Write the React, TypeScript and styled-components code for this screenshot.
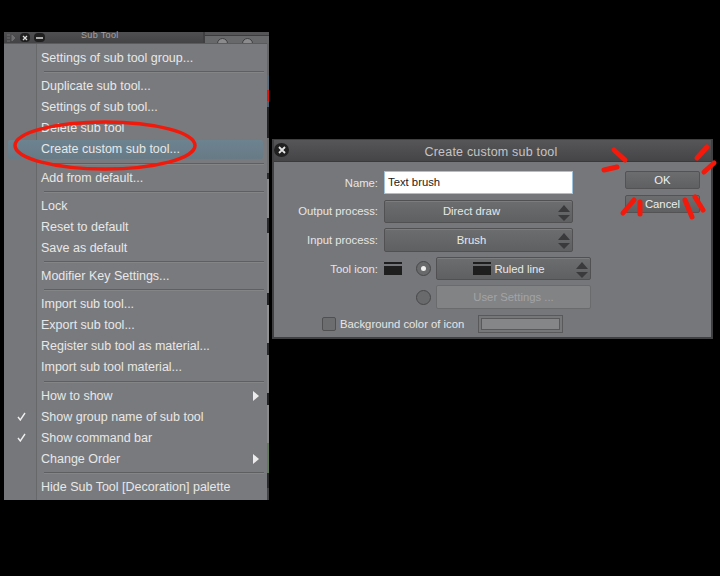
import React from 'react';
import styled, { createGlobalStyle } from 'styled-components';

const Global = createGlobalStyle`
  html, body { margin: 0; padding: 0; background: #000; }
  body { width: 720px; height: 576px; overflow: hidden; font-family: "Liberation Sans", Arial, sans-serif; }
`;
const Desktop = styled.div`position: relative; width: 720px; height: 576px; background: #000; overflow: hidden;`;

const Palette = styled.div`
  position: absolute; left: 4px; top: 32px; width: 265px; height: 468px;
  display: flex; flex-direction: column; background: #3d3d3f;
`;
const PaletteBar = styled.div`
  height: 11px; display: flex; align-items: center; gap: 4px; padding-left: 3px; position: relative;
  background: linear-gradient(#505052, #434345); flex: none;
`;
const PaletteTitle = styled.span`
  position: absolute; left: 77px; top: -2px; font-size: 9px; line-height: 11px; color: #a3a3a5; letter-spacing: .35px;
`;
const BarPill = styled.span<{ $wide?: boolean }>`
  width: ${p => (p.$wide ? 11 : 10)}px; height: 9px; border-radius: 4px; background: #1f1f20; display: flex; align-items: center; justify-content: center;
`;
const BehindTab = styled.div`
  position: absolute; left: 199px; top: 0; width: 66px; height: 11px; background: linear-gradient(#555557 0 3px, #3c3c3e 3px 4px, #68696b 4px); border-left: 2px solid #3f3f41;
  box-sizing: border-box; display: flex; gap: 14px; padding: 6px 0 0 12px; overflow: hidden;
`;
const BehindKnob = styled.span`width: 9px; height: 9px; border-radius: 50%; background: #8b8b8d; border: 1px solid #3f3f41;`;
const Strip = styled.div`
  position: absolute; right: 0; top: 11px; width: 2px; height: 457px;
  background: linear-gradient(#666 0 32px, #5a6d7d 32px 47px, #e0160c 47px 58px, #4f6070 58px 64px, #232323 64px 95px, #6e6e6e 95px 130px, #2a2a2a 130px 136px, #8a8a8a 136px 175px, #2a2a2a 175px 190px, #858585 190px 250px, #222 250px 262px, #909090 262px 300px, #2a2a2a 300px 312px, #858585 312px 350px, #222 350px 362px, #8a8a8a 362px 400px, #62795a 400px 430px, #2a2a2a 430px 445px, #444 445px);
`;
const Menu = styled.div`
  flex: 1; width: 263px; box-sizing: border-box; background: linear-gradient(90deg, #76777a 0 32px, #67686a 32px 33px, #797a7d 33px);
  padding: 4px 3px 2px; display: flex; flex-direction: column; border-top: 1px solid #5b5b5d; margin-right: 2px;
`;
const Row = styled.div<{ $selected?: boolean }>`
  height: ${p => (p.$selected ? 19 : 21)}px; line-height: ${p => (p.$selected ? 19 : 21)}px;
  margin: ${p => (p.$selected ? '1px' : '0')}; position: relative;
  font-size: 12.5px; color: #e8e8e8; white-space: nowrap;
  padding-left: ${p => (p.$selected ? '33px' : '34px')};
  background: ${p => (p.$selected ? 'linear-gradient(#6d8390, #677a86)' : 'none')};
  border-radius: ${p => (p.$selected ? '2px' : '0')};
`;
const CheckIcon = styled.svg`position: absolute; left: 10px; top: 5px;`;
const Arrow = styled.span`
  position: absolute; right: 5px; top: 5px; width: 0; height: 0;
  border-left: 6px solid #ececec; border-top: 5.5px solid transparent; border-bottom: 5.5px solid transparent;
`;
const Sep = styled.div`height: 2px; margin: 2.3px 0 3px 37px; background: #5e5f61; border-bottom: 1px solid #848587; box-sizing: border-box;`;

const Dialog = styled.div`
  position: absolute; left: 272px; top: 139px; width: 441px; height: 200px; box-sizing: border-box;
  display: flex; flex-direction: column; background: #76777a; border: 1px solid #404042; border-width: 1px 2px 2px 2px;
`;
const TitleBar = styled.div`
  height: 22px; flex: none; position: relative; text-align: center; line-height: 25px; font-size: 12.5px; letter-spacing: .2px;
  color: #c4c4c6; background: linear-gradient(#565658, #454547); border-bottom: 1px solid #3a3a3c; box-sizing: border-box; padding-right: 3px;
`;
const CloseBtn = styled.span`
  position: absolute; left: 0; top: 3px; width: 15px; height: 14px; border-radius: 50%; background: #202021;
  display: flex; align-items: center; justify-content: center;
`;
const DialogBody = styled.div`flex: 1; display: flex; padding: 9px 0 0;`;
const Form = styled.div`width: 351px; flex: none; display: flex; flex-direction: column; gap: 5px;`;
const FormRow = styled.div`display: flex; align-items: center; height: 23.6px;`;
const Label = styled.div`
  width: 104px; text-align: right; font-size: 11.3px; color: #e6e6e6; flex: none; margin-right: 6px; white-space: nowrap;
`;
const NameInput = styled.div`
  width: 189px; height: 23px; box-sizing: border-box; background: #fff; border: 1px solid #9fc3dc; padding-left: 3px;
  font-size: 11.3px; line-height: 21px; color: #222;
`;
const Select = styled.div<{ $width: number; $pad: number }>`
  width: ${p => p.$width}px; height: 23.6px; box-sizing: border-box; border: 1px solid #515153; border-radius: 2px;
  background: linear-gradient(#6c6d6f, #5f6062); color: #e8e8e8; font-size: 11.3px;
  display: flex; align-items: center; justify-content: center; gap: 3px; position: relative; padding-right: ${p => p.$pad}px;
  box-shadow: inset 0 1px 0 #7b7c7e;
`;
const Stepper = styled.svg`position: absolute; right: 1px; top: 3px;`;
const ToolGlyph = styled.svg`flex: none;`;
const Radio = styled.span<{ $on?: boolean }>`
  width: 15px; height: 15px; box-sizing: border-box; border-radius: 50%; border: 1px solid #48484a; background: #696a6c; flex: none;
  display: flex; align-items: center; justify-content: center; margin: 0 5px 0 0;
  &::after { content: ''; width: 5px; height: 5px; border-radius: 50%; background: ${p => (p.$on ? '#f0f0f0' : 'transparent')}; }
`;
const RadioSlot = styled.div<{ $indent: number }>`display: flex; align-items: center; margin-left: ${p => p.$indent}px;`;
const Disabled = styled.div`
  width: 155px; height: 23.6px; box-sizing: border-box; background: #828385; border: 1px solid #6a6b6d; border-radius: 2px;
  color: #a3a4a6; font-size: 11.3px; display: flex; align-items: center; justify-content: center;
`;
const BgRow = styled.div`display: flex; align-items: center; height: 18px; margin-top: 1px; padding-left: 48px;`;
const Checkbox = styled.span`width: 14px; height: 14px; box-sizing: border-box; border: 1px solid #505052; border-radius: 2px; background: #6c6d6f; flex: none;`;
const BgLabel = styled.span`margin-left: 4px; font-size: 11.3px; color: #e6e6e6; white-space: nowrap;`;
const Swatch = styled.span`
  margin-left: 14px; width: 85px; height: 18px; box-sizing: border-box; border: 1px solid #59595b; padding: 2px; background: #767779; display: block;
  &::after { content: ''; display: block; height: 100%; box-sizing: border-box; background: #858688; border: 1px solid #59595b; }
`;
const Buttons = styled.div`display: flex; flex-direction: column; gap: 6px;`;
const Push = styled.div`
  width: 75px; height: 18px; box-sizing: border-box; border: 1px solid #535355; border-radius: 2px; background: linear-gradient(#6c6d6f, #5f6062);
  color: #eee; font-size: 11.3px; line-height: 16px; text-align: center;
`;
const Overlay = styled.svg`position: absolute; left: 0; top: 0; pointer-events: none;`;

const top: (string | null | { t: string; sel?: boolean; check?: boolean; arrow?: boolean })[] = [
  'Settings of sub tool group...', null,
  'Duplicate sub tool...', 'Settings of sub tool...', 'Delete sub tool',
  { t: 'Create custom sub tool...', sel: true }, null,
  'Add from default...', null,
  'Lock', 'Reset to default', 'Save as default', null,
  'Modifier Key Settings...', null,
  'Import sub tool...', 'Export sub tool...', 'Register sub tool as material...', 'Import sub tool material...', null,
  { t: 'How to show', arrow: true }, { t: 'Show group name of sub tool', check: true }, { t: 'Show command bar', check: true }, { t: 'Change Order', arrow: true }, null,
  'Hide Sub Tool [Decoration] palette',
];

const StepIcon = () => (
  <Stepper width="14" height="18" viewBox="0 0 14 18">
    <path d="M7 1 13 8H1Z" fill="#3a3a3c" />
    <path d="M1 11H13L7 17Z" fill="#3a3a3c" />
  </Stepper>
);
const RuledIcon = () => (
  <ToolGlyph width="18" height="13" viewBox="0 0 18 13">
    <rect width="18" height="2" y="0" fill="#1e1e1f" />
    <rect width="18" height="9" y="4" fill="#1e1e1f" />
  </ToolGlyph>
);

export default function App() {
  return (
    <Desktop>
      <Global />
      <Palette>
        <PaletteBar>
          <svg width="9" height="8" viewBox="0 0 9 8"><path d="M0 1H3M0 4H3M0 7H3M5 1V7L8 4Z" stroke="#6e6e70" fill="#6e6e70" /></svg>
          <BarPill><svg width="6" height="6" viewBox="0 0 6 6"><path d="M1 1 5 5M5 1 1 5" stroke="#ddd" strokeWidth="1.3" /></svg></BarPill>
          <BarPill $wide><svg width="7" height="4" viewBox="0 0 7 4"><path d="M0 2H7" stroke="#ddd" strokeWidth="1.5" /></svg></BarPill>
          <PaletteTitle>Sub Tool</PaletteTitle>
          <BehindTab><BehindKnob /><BehindKnob /></BehindTab>
        </PaletteBar>
        <Strip />
        <Menu>
          {top.map((r, i) => {
            if (r === null) return <Sep key={i} />;
            if (typeof r === 'string') return <Row key={i}>{r}</Row>;
            return (
              <Row key={i} $selected={r.sel}>
                {r.check && (
                  <CheckIcon width="9" height="9" viewBox="0 0 9 9">
                    <path d="M1 5 3.3 8 8 1" fill="none" stroke="#efefef" strokeWidth="1.4" />
                  </CheckIcon>
                )}
                {r.t}
                {r.arrow && <Arrow />}
              </Row>
            );
          })}
        </Menu>
      </Palette>

      <Dialog>
        <TitleBar>
          <CloseBtn><svg width="8" height="8" viewBox="0 0 8 8"><path d="M1 1 7 7M7 1 1 7" stroke="#e4e4e4" strokeWidth="1.8" /></svg></CloseBtn>
          Create custom sub tool
        </TitleBar>
        <DialogBody>
          <Form>
            <FormRow><Label>Name:</Label><NameInput>Text brush</NameInput></FormRow>
            <FormRow><Label>Output process:</Label><Select $width={189} $pad={14}>Direct draw<StepIcon /></Select></FormRow>
            <FormRow><Label>Input process:</Label><Select $width={189} $pad={14}>Brush<StepIcon /></Select></FormRow>
            <FormRow>
              <Label>Tool icon:</Label>
              <RuledIcon />
              <RadioSlot $indent={14}><Radio $on /></RadioSlot>
              <Select $width={155} $pad={9}><RuledIcon />Ruled line<StepIcon /></Select>
            </FormRow>
            <FormRow>
              <Label />
              <RadioSlot $indent={32}><Radio /></RadioSlot>
              <Disabled>User Settings ...</Disabled>
            </FormRow>
            <BgRow><Checkbox /><BgLabel>Background color of icon</BgLabel><Swatch /></BgRow>
          </Form>
          <Buttons>
            <Push>OK</Push>
            <Push>Cancel</Push>
          </Buttons>
        </DialogBody>
      </Dialog>

      <Overlay width="720" height="576" viewBox="0 0 720 576">
        <ellipse cx="105" cy="145.5" rx="90" ry="23.5" fill="none" stroke="#f01a0c" strokeWidth="3.5" />
        <g stroke="#f5190b" strokeWidth="5" strokeLinecap="round" fill="none">
          <path d="M614 150 625 160" />
          <path d="M604 170 617 167" />
          <path d="M707 147 697 158" />
          <path d="M714 163 704 172" />
          <path d="M634 200 623 213" />
          <path d="M640 202 640 214" />
          <path d="M685 200 692 217" />
          <path d="M695 197 703 210" />
        </g>
      </Overlay>
    </Desktop>
  );
}
